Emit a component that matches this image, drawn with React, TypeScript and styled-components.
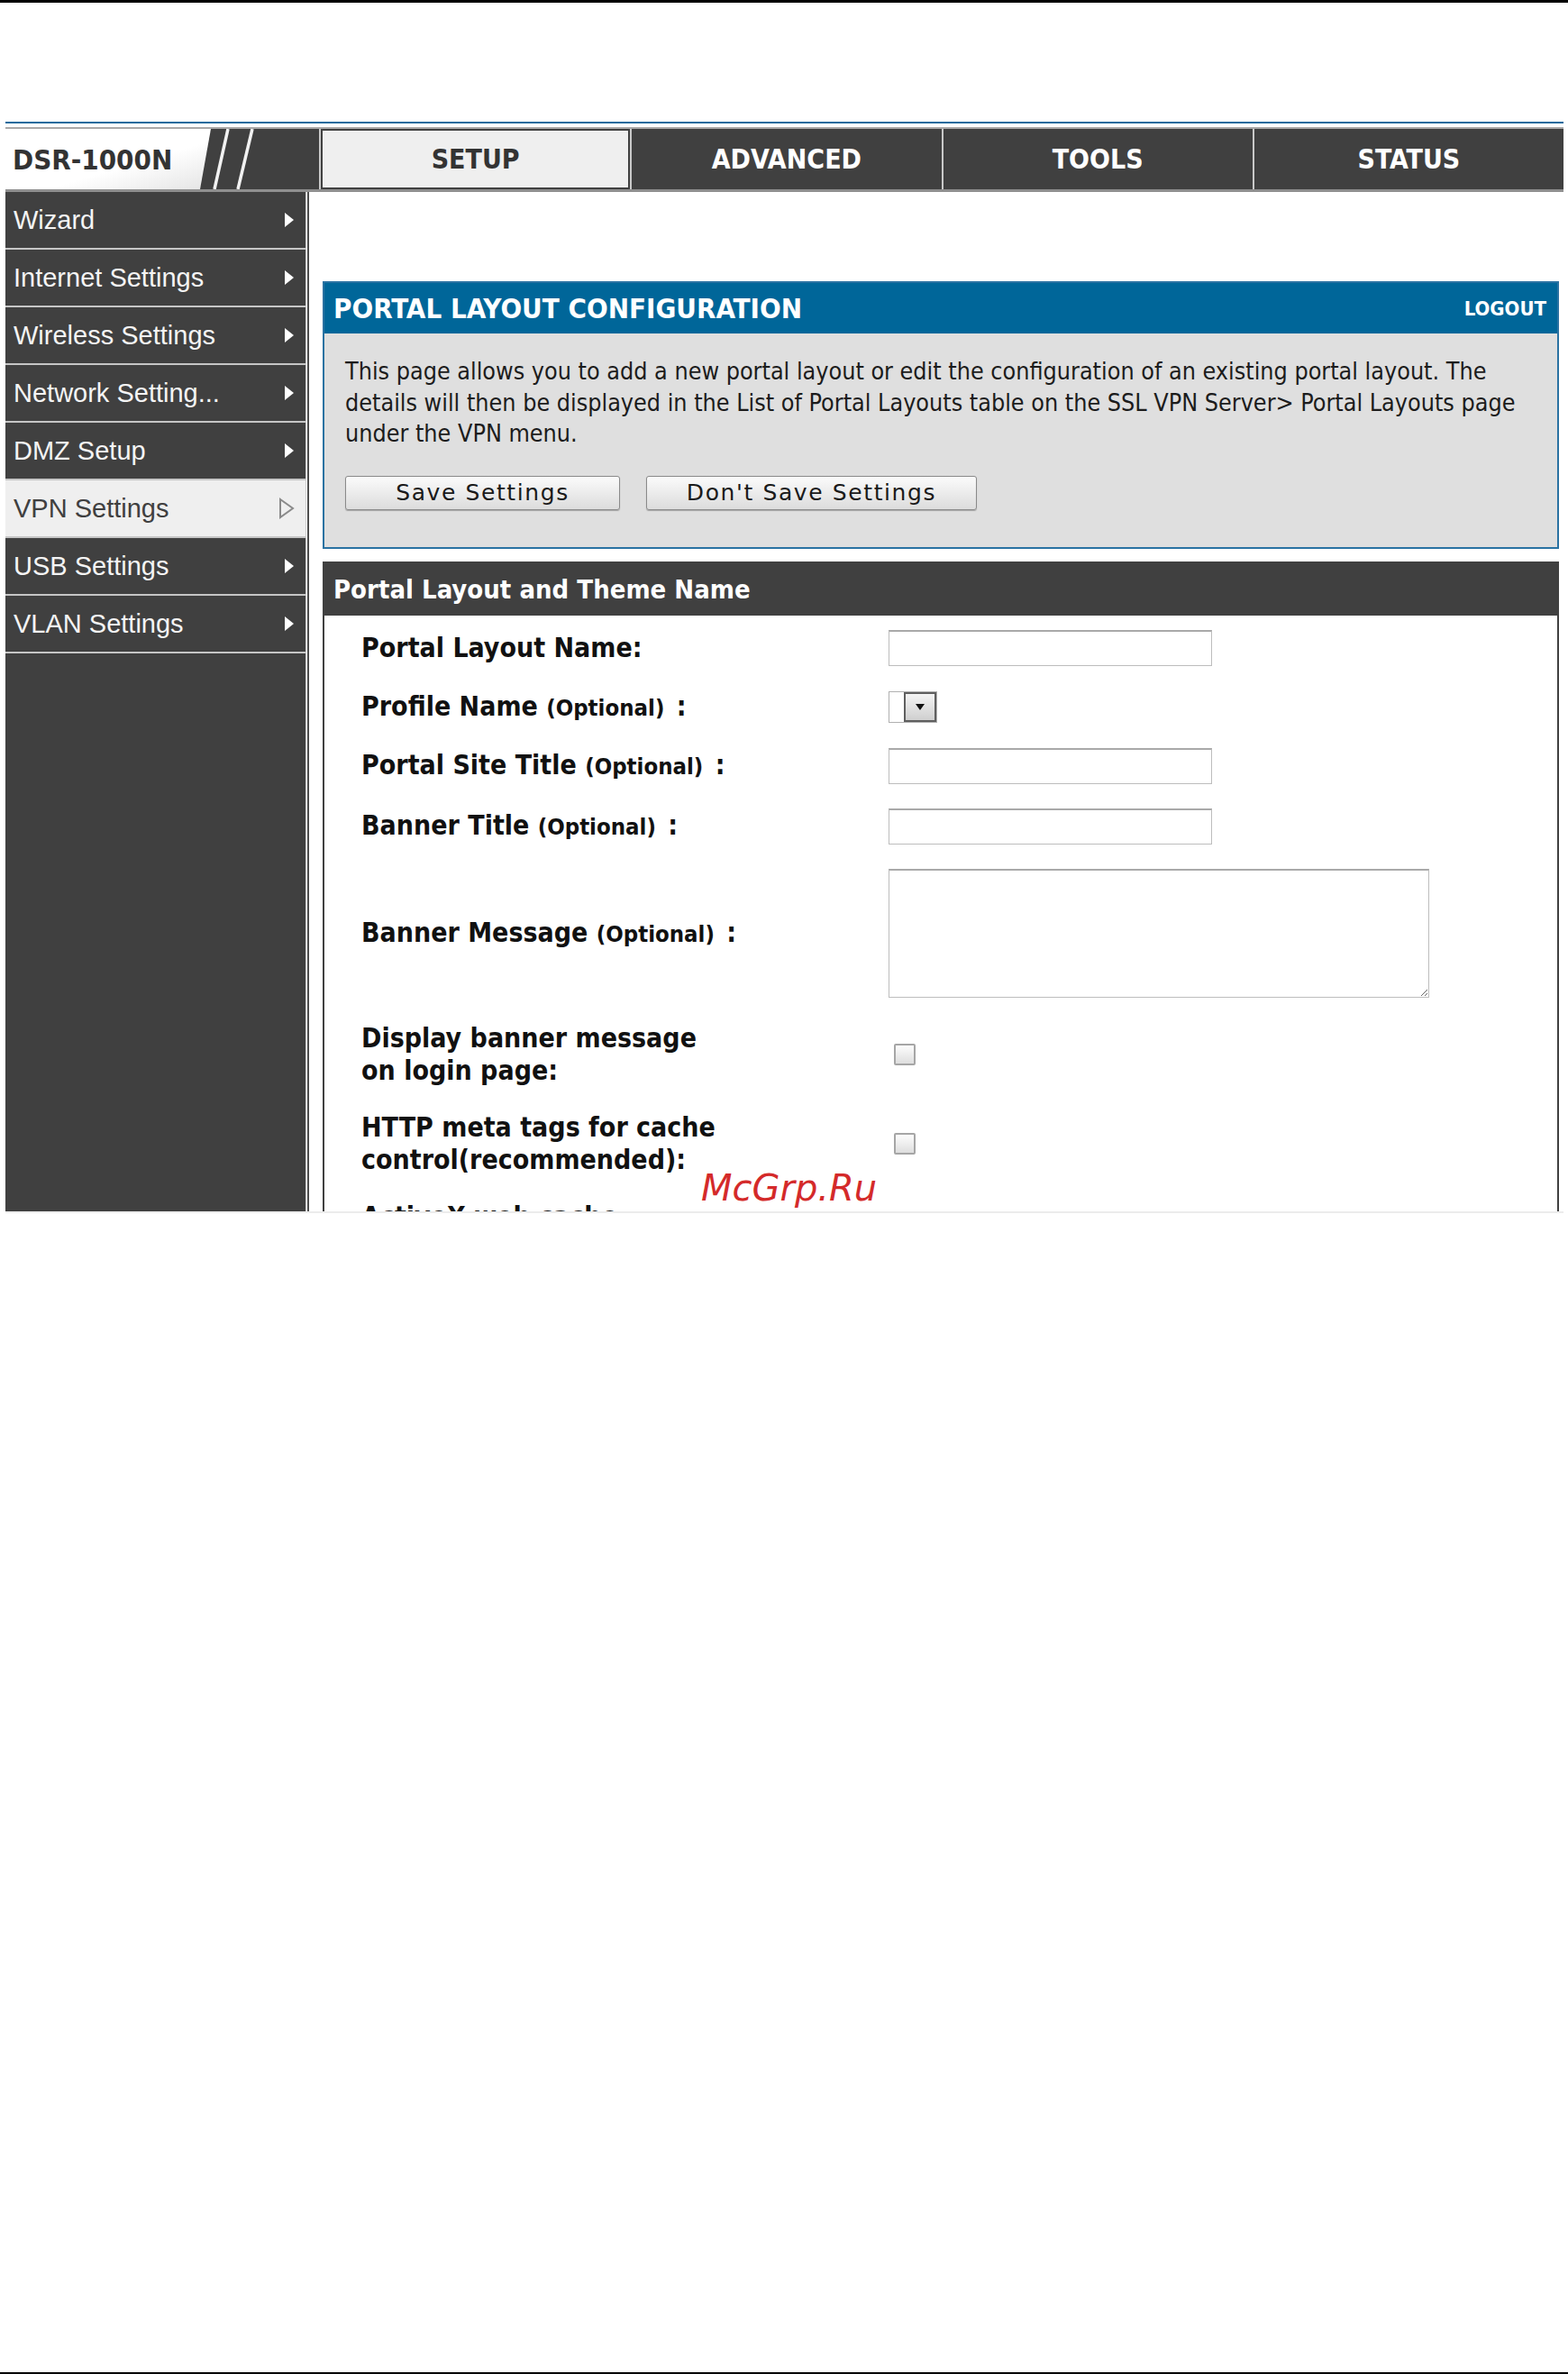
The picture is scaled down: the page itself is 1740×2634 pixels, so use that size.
import React from 'react';
import styled, { createGlobalStyle } from 'styled-components';

const UI_FONT = `'DejaVu Sans Condensed', 'Open Sans', 'DejaVu Sans', sans-serif`;
const MENU_FONT = `'Liberation Sans', Arial, sans-serif`;

const GlobalStyle = createGlobalStyle`
  html, body {
    margin: 0;
    padding: 0;
    background: #ffffff;
  }
  body {
    font-family: ${UI_FONT};
    color: #1a1a1a;
  }
`;

const menu = [
  'Wizard',
  'Internet Settings',
  'Wireless Settings',
  'Network Setting...',
  'DMZ Setup',
  'VPN Settings',
  'USB Settings',
  'VLAN Settings',
];

const tabs = ['SETUP', 'ADVANCED', 'TOOLS', 'STATUS'];

export default function App() {
  return (
    <>
      <GlobalStyle />
      <Page>
        <TopRule />
        <Screen>
          <BlueRule />
          <Header>
            <Logo>
              <LogoArt viewBox="0 0 348 65" preserveAspectRatio="none">
                <defs>
                  <linearGradient id="logoFade" x1="0" y1="0" x2="1" y2="1">
                    <stop offset="0.6" stopColor="#ffffff" />
                    <stop offset="1" stopColor="#e4e4e4" />
                  </linearGradient>
                </defs>
                <polygon points="0,0 228,0 216,65 0,65" fill="url(#logoFade)" />
                <line x1="247" y1="0" x2="232" y2="65" stroke="#f2f2f2" strokeWidth="3.5" />
                <line x1="274" y1="0" x2="258" y2="65" stroke="#f2f2f2" strokeWidth="3.5" />
              </LogoArt>
              <LogoText>DSR-1000N</LogoText>
            </Logo>
            {tabs.map((t, i) => (
              <Tab key={t} $active={i === 0}>
                {t}
              </Tab>
            ))}
          </Header>

          <Body>
            <Sidebar>
              {menu.map((m) => {
                const active = m === 'VPN Settings';
                return (
                  <MenuItem key={m} $active={active}>
                    <span>{m}</span>
                    {active ? (
                      <svg width="18" height="24" viewBox="0 0 18 24">
                        <polygon points="2,2 16,12 2,22" fill="none" stroke="#8a8a8a" strokeWidth="2" />
                      </svg>
                    ) : (
                      <svg width="12" height="18" viewBox="0 0 12 18">
                        <polygon points="1,1 11,9 1,17" fill="#ffffff" />
                      </svg>
                    )}
                  </MenuItem>
                );
              })}
            </Sidebar>
            <Divider />
            <Content>
              <Panel $border="#2a72a2">
                <PanelHeader $bg="#006699" $size={31}>
                  <span>PORTAL LAYOUT CONFIGURATION</span>
                  <Logout>LOGOUT</Logout>
                </PanelHeader>
                <InfoBody>
                  <Description>
                    This page allows you to add a new portal layout or edit the configuration of an existing portal layout. The
                    <br />
                    details will then be displayed in the List of Portal Layouts table on the SSL VPN Server&gt; Portal Layouts page
                    <br />
                    under the VPN menu.
                  </Description>
                  <ButtonRow>
                    <Button $width={305}>Save Settings</Button>
                    <Button $width={367}>Don't Save Settings</Button>
                  </ButtonRow>
                </InfoBody>
              </Panel>

              <Panel $border="#404040">
                <PanelHeader $bg="#404040" $size={29} $tall>
                  <span>Portal Layout and Theme Name</span>
                </PanelHeader>
                <FormGrid>
                  <Label>Portal Layout Name:</Label>
                  <Field>
                    <TextInput />
                  </Field>

                  <Label>
                    Profile Name <Optional>(Optional)</Optional> :
                  </Label>
                  <Field>
                    <Dropdown>
                      <DropButton>
                        <svg width="10" height="7" viewBox="0 0 10 7">
                          <polygon points="0,0 10,0 5,7" fill="#111" />
                        </svg>
                      </DropButton>
                    </Dropdown>
                  </Field>

                  <Label>
                    Portal Site Title <Optional>(Optional)</Optional> :
                  </Label>
                  <Field>
                    <TextInput />
                  </Field>

                  <Label>
                    Banner Title <Optional>(Optional)</Optional> :
                  </Label>
                  <Field>
                    <TextInput />
                  </Field>

                  <Label>
                    Banner Message <Optional>(Optional)</Optional> :
                  </Label>
                  <Field>
                    <TextArea />
                  </Field>

                  <Label>
                    Display banner message
                    <br />
                    on login page:
                  </Label>
                  <Field>
                    <Check type="checkbox" />
                  </Field>

                  <Label>
                    HTTP meta tags for cache
                    <br />
                    control(recommended):
                  </Label>
                  <Field>
                    <Check type="checkbox" />
                  </Field>

                  <Label>
                    ActiveX web cache
                    <br />
                    cleaner:
                  </Label>
                  <Field>
                    <Check type="checkbox" />
                  </Field>
                </FormGrid>
              </Panel>
            </Content>
          </Body>
          <Watermark>McGrp.Ru</Watermark>
        </Screen>
        <BottomRule />
      </Page>
    </>
  );
}

const Page = styled.div`
  width: 1740px;
  height: 2634px;
  display: flex;
  flex-direction: column;
  overflow: hidden;
`;

const TopRule = styled.div`
  height: 3px;
  background: #000;
  flex: none;
`;

const BottomRule = styled.div`
  height: 2px;
  background: #000;
  margin-top: auto;
  flex: none;
`;

const Screen = styled.div`
  position: relative;
  margin: 132px 5px 0 6px;
`;

const BlueRule = styled.div`
  height: 2px;
  background: #176a9d;
  margin-bottom: 4px;
`;

const Header = styled.div`
  display: flex;
  height: 72px;
  box-sizing: border-box;
  background: #404040;
  border-top: 2px solid #a8a8a8;
  border-bottom: 3px solid #8f8f8f;
`;

const Logo = styled.div`
  position: relative;
  width: 348px;
  flex: none;
  display: flex;
  align-items: center;
  padding-left: 8px;
  box-sizing: border-box;
`;

const LogoArt = styled.svg`
  position: absolute;
  inset: 0;
  width: 100%;
  height: 100%;
`;

const LogoText = styled.span`
  position: relative;
  font-weight: bold;
  font-size: 31px;
  color: #333;
`;

const Tab = styled.div<{ $active?: boolean }>`
  flex: 1;
  display: flex;
  align-items: center;
  justify-content: center;
  border-left: 2px solid #c9c9c9;
  font-weight: bold;
  font-size: 30px;
  color: ${(p) => (p.$active ? '#333' : '#fff')};
  background: ${(p) => (p.$active ? '#efefef' : '#404040')};
  box-shadow: ${(p) => (p.$active ? 'inset 0 0 0 2px #404040' : 'none')};
`;

const Body = styled.div`
  display: flex;
  height: 1131px;
  overflow: hidden;
  border-bottom: 2px solid #ececec;
`;

const Sidebar = styled.nav`
  width: 333px;
  flex: none;
  background: #404040;
  border-right: 1px solid #d0d0d0;
`;

const MenuItem = styled.div<{ $active?: boolean }>`
  height: 62px;
  display: flex;
  align-items: center;
  justify-content: space-between;
  padding: 0 12px 0 9px;
  border-bottom: 2px solid #c6c6c6;
  font-family: ${MENU_FONT};
  font-size: 29px;
  color: ${(p) => (p.$active ? '#404040' : '#f4f4f4')};
  background: ${(p) => (p.$active ? '#efefef' : '#404040')};
`;

const Divider = styled.div`
  width: 2px;
  flex: none;
  margin-left: 1px;
  background: #4d4d4d;
`;

const Content = styled.main`
  flex: 1;
  padding: 99px 5px 0 15px;
`;

const Panel = styled.section<{ $border: string }>`
  border: 2px solid ${(p) => p.$border};
  margin-bottom: 14px;
`;

const PanelHeader = styled.div<{ $bg: string; $size: number; $tall?: boolean }>`
  height: ${(p) => (p.$tall ? 58 : 56)}px;
  display: flex;
  align-items: center;
  justify-content: space-between;
  padding: 0 12px 0 10px;
  background: ${(p) => p.$bg};
  color: #fff;
  font-weight: bold;
  font-size: ${(p) => p.$size}px;
`;

const Logout = styled.span`
  font-size: 22px;
`;

const InfoBody = styled.div`
  background: #dfdfdf;
  padding: 25px 23px 41px 23px;
`;

const Description = styled.p`
  margin: 0;
  font-size: 26.7px;
  line-height: 34.5px;
  white-space: nowrap;
  color: #1c1c1c;
`;

const ButtonRow = styled.div`
  display: flex;
  gap: 29px;
  margin-top: 29px;
`;

const Button = styled.button<{ $width: number }>`
  width: ${(p) => p.$width}px;
  height: 38px;
  padding: 0;
  border: 1px solid #8a8a8a;
  border-radius: 3px;
  background: linear-gradient(#fbfbfb, #dcdcdc);
  box-shadow: 0 1px 1px rgba(0, 0, 0, 0.25);
  font-family: 'DejaVu Sans', sans-serif;
  font-size: 25px;
  letter-spacing: 1.6px;
  color: #1a1a1a;
`;

const FormGrid = styled.div`
  display: grid;
  grid-template-columns: 585px 1fr;
  row-gap: 27px;
  align-items: center;
  padding: 16px 0 40px 41px;
  background: #fff;
`;

const Label = styled.div`
  font-weight: bold;
  font-size: 30px;
  line-height: 36px;
  color: #111;
`;

const Optional = styled.span`
  font-size: 25.5px;
  margin-right: 4px;
`;

const Field = styled.div`
  display: flex;
  align-items: center;
`;

const TextInput = styled.input`
  width: 359px;
  height: 40px;
  box-sizing: border-box;
  border: 1px solid #bdbdbd;
  border-top: 2px solid #a9a9a9;
  background: #fff;
  outline: none;
`;

const Dropdown = styled.div`
  width: 54px;
  height: 35px;
  box-sizing: border-box;
  display: flex;
  justify-content: flex-end;
  border: 1px solid #b0b0b0;
  background: #fff;
`;

const DropButton = styled.div`
  width: 36px;
  height: 100%;
  box-sizing: border-box;
  display: flex;
  align-items: center;
  justify-content: center;
  border: 2px solid #5f5f5f;
  background: linear-gradient(#f4f4f4, #cfcfcf);
`;

const TextArea = styled.textarea`
  width: 600px;
  height: 143px;
  box-sizing: border-box;
  border: 1px solid #bdbdbd;
  border-top: 2px solid #a9a9a9;
  outline: none;
`;

const Check = styled.input`
  appearance: none;
  width: 24px;
  height: 24px;
  margin: 0 0 0 6px;
  box-sizing: border-box;
  border: 2px solid #a6a6a6;
  border-radius: 2px;
  background: linear-gradient(#fdfdfd, #dedede);
`;

const Watermark = styled.span`
  position: absolute;
  left: 772px;
  top: 1163px;
  font-family: 'DejaVu Sans', sans-serif;
  font-style: italic;
  font-size: 40px;
  line-height: 40px;
  color: #d42a2a;
`;
